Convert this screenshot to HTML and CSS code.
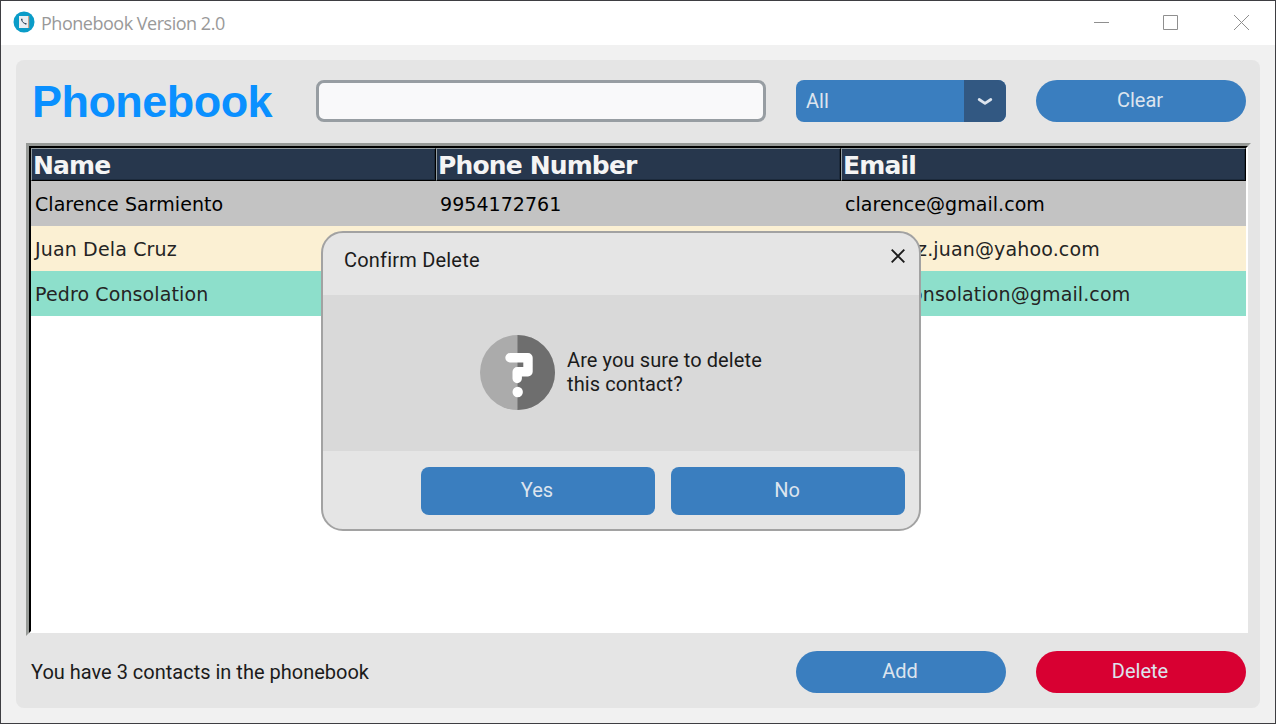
FILE: index.html
```html
<!DOCTYPE html>
<html lang="en">
<head>
<meta charset="utf-8">
<title>Phonebook Version 2.0</title>
<link rel="stylesheet" href="styles.css">
</head>
<body>
<div class="window">
  <header class="titlebar">
    <svg class="app-icon" width="22" height="22" viewBox="0 0 22 22"><circle cx="11" cy="11" r="10.5" fill="#0a9cc8"/><path d="M6 5h9v12H6z" fill="#e9eef2"/><path d="M15 5h1.200v12H15z" fill="#c9a58c"/><path d="M8.800 8.800c.2 2 1.600 3.400 3.600 3.800" fill="none" stroke="#34495e" stroke-width="1"/><path d="M8 8.600h1.500M12 12.800h1.500" stroke="#34495e" stroke-width="1.500"/></svg>
    <span class="window-title">Phonebook Version 2.0</span>
    <svg class="window-controls" width="156" height="16" viewBox="0 0 156 16" fill="none" stroke="#8f8f8f"><path d="M0 7.500h15"/><path d="M69.500 .5h14v14h-14z"/><path d="M140 0l15 15M155 0l-15 15"/></svg>
  </header>
  <main class="panel">
    <div class="toolbar">
      <h1 class="heading">Phonebook</h1>
      <input class="search" type="text" aria-label="Search">
      <div class="select"><span class="select-value">All</span><span class="select-arrow"><svg width="16" height="10" viewBox="0 0 16 10"><path d="M2.200 3.500L8 7.300l5.800-3.800" fill="none" stroke="#dce4ee" stroke-width="2.800" stroke-linecap="round" stroke-linejoin="round"/></svg></span></div>
      <button class="pill">Clear</button>
    </div>
    <div class="table">
      <div class="row head"><div>Name</div><div>Phone Number</div><div>Email</div></div>
      <div class="row selected"><div>Clarence Sarmiento</div><div>9954172761</div><div>clarence@gmail.com</div></div>
      <div class="row cream"><div>Juan Dela Cruz</div><div></div><div>delacruz.juan@yahoo.com</div></div>
      <div class="row mint"><div>Pedro Consolation</div><div></div><div>pedroconsolation@gmail.com</div></div>
    </div>
    <div class="bottom">
      <span class="status">You have 3 contacts in the phonebook</span>
      <button class="pill">Add</button>
      <button class="pill danger">Delete</button>
    </div>
  </main>
</div>
<section class="dialog">
  <div class="dialog-head">
    <span class="dialog-title">Confirm Delete</span>
    <svg class="dialog-close" width="14" height="14" viewBox="0 0 14 14"><path d="M.7.7l12.600 12.600M13.300.7L.7 13.300" stroke="#1b1b1b" stroke-width="1.900"/></svg>
  </div>
  <div class="dialog-body">
    <svg width="75" height="75" viewBox="0 0 75 75"><circle cx="37.500" cy="37.500" r="37.500" fill="#ababab"/><path d="M37.500 0a37.500 37.500 0 0 1 0 75z" fill="#6e6e6e"/><path d="M30 22.700H48V36.700H37.200V43.500" fill="none" stroke="#fff" stroke-width="9.400" stroke-linecap="round" stroke-linejoin="round"/><circle cx="37.700" cy="57" r="5.200" fill="#fff"/></svg>
    <p class="message">Are you sure to delete<br>this contact?</p>
  </div>
  <div class="dialog-foot"><button class="choice">Yes</button><button class="choice">No</button></div>
</section>
</body>
</html>
```
FILE: styles.css
```css
* { box-sizing: border-box; }
body { margin: 0; font-family: Roboto, sans-serif; font-size: 20px; color: #1b1b1b; overflow: hidden; }
button { font: inherit; color: #dce4ee; border: 0; padding: 0 2px 2px 0; background: #3a7ebf; }
.window { width: 1276px; height: 724px; border: 1px solid #3e3e42; background: #f1f1f1; display: flex; flex-direction: column; }
.titlebar { height: 44px; background: #fff; display: flex; align-items: flex-start; padding: 10px 25px 0 12px; }
.app-icon { flex: none; }
.window-title { flex: 1; margin-left: 6px; font: 18px/24px "Open Sans", sans-serif; letter-spacing: -.48px; color: #999; }
.window-controls { margin-top: 4px; flex: none; }
.panel { margin: 15px; height: 648px; background: #e5e5e5; border-radius: 8px; display: flex; flex-direction: column; padding: 20px 9px 0 10px; }
.toolbar { height: 42px; display: flex; align-items: center; padding: 0 5px 0 6px; margin-bottom: 21px; }
.heading { margin: 0; width: 284px; padding-top: 2px; font: bold 45px/44px "Liberation Sans", sans-serif; letter-spacing: -.55px; color: #0a90ff; }
.search { width: 450px; height: 42px; border: 3px solid #979da2; border-radius: 8px; background: #f9f9fa; margin-right: 30px; }
.select { width: 210px; height: 42px; display: flex; border-radius: 8px; overflow: hidden; margin-right: 30px; background: #3a7ebf; color: #dce4ee; line-height: 42px; }
.select-value { flex: 1; padding-left: 10px; }
.select-arrow { width: 42px; background: #325882; display: flex; align-items: center; justify-content: center; }
.pill { width: 210px; height: 42px; border-radius: 21px; flex: none; }
.table { height: 493px; background: #fff; border: 3px solid; border-color: #979a97 #e5e5e5 #e5e5e5 #979a97; display: flex; flex-direction: column; position: relative; padding: 2px; }
.table::before { content: ""; position: absolute; inset: 0; border: 2px solid; border-color: #000 #fff #fff #000; }
.row { height: 45px; display: grid; grid-template-columns: repeat(3, 405px); font: 19px/47px "DejaVu Sans", sans-serif; letter-spacing: .05px; color: #242424; flex: none; }
.row > div { padding-left: 4px; white-space: nowrap; height: 45px; }
.row.head { height: 33px; font: bold 25px/32px "DejaVu Sans", sans-serif; letter-spacing: -.85px; color: #f4f4f4; }
.row.head > div { height: 33px; background: #27374d; border: 1px solid; border-color: #929ca0 #000 #000 #929ca0; padding-left: 1px; line-height: 33px; box-shadow: inset -1px -1px #1c2a3c; }
.selected { background: #c3c3c3; color: #000; }
.cream { background: #fbf0d3; letter-spacing: .15px; }
.mint { background: #8ddfcb; letter-spacing: .12px; }
.bottom { display: flex; padding: 15px 5px 0; gap: 30px; }
.status { flex: 1; line-height: 42px; }
.danger { background: #d80032; }
.dialog { position: absolute; left: 321px; top: 231px; width: 600px; height: 300px; border: 2px solid #a2a2a2; border-radius: 22px; background: #e5e5e5; overflow: hidden; display: flex; flex-direction: column; }
.dialog-head { height: 62px; display: flex; justify-content: space-between; padding: 15px 14px 0 21px; }
.dialog-title { line-height: 24px; letter-spacing: .2px; }
.dialog-close { margin-top: 1px; }
.dialog-body { height: 156px; background: #d9d9d9; display: flex; align-items: center; padding: 0 0 2px 157px; }
.message { margin: 0 0 0 12px; line-height: 24px; letter-spacing: .1px; }
.dialog-foot { display: flex; gap: 16px; justify-content: flex-end; padding: 16px 14px 0; }
.choice { width: 234px; height: 48px; border-radius: 8px; }
```
